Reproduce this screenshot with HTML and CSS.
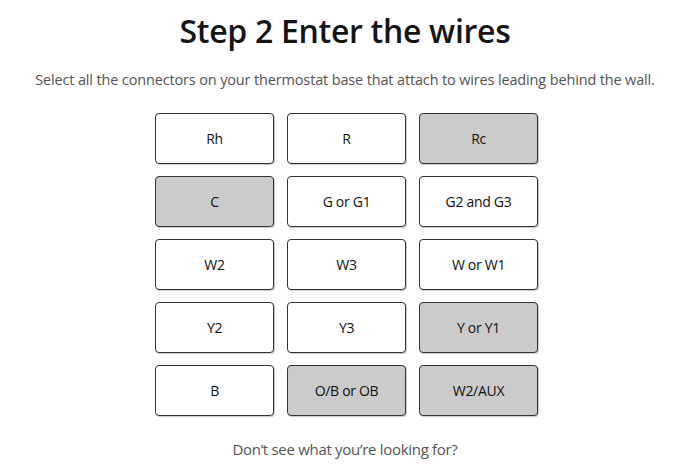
FILE: index.html
```html
<!DOCTYPE html>
<html>
<head>
<meta charset="utf-8">
<link rel="stylesheet" href="styles.css">
</head>
<body>
<main class="page">
  <h1 class="title">Step 2 Enter the wires</h1>
  <p class="subtitle">Select all the connectors on your thermostat base that attach to wires leading behind the wall.</p>
  <div class="grid">
    <button class="wire">Rh</button>
    <button class="wire">R</button>
    <button class="wire selected">Rc</button>
    <button class="wire selected">C</button>
    <button class="wire">G or G1</button>
    <button class="wire">G2 and G3</button>
    <button class="wire">W2</button>
    <button class="wire">W3</button>
    <button class="wire">W or W1</button>
    <button class="wire">Y2</button>
    <button class="wire">Y3</button>
    <button class="wire selected">Y or Y1</button>
    <button class="wire">B</button>
    <button class="wire selected">O/B or OB</button>
    <button class="wire selected">W2/AUX</button>
  </div>
  <p class="footer">Don’t see what you’re looking for?</p>
</main>
</body>
</html>
```
FILE: styles.css
```css
* { box-sizing: border-box; }
html, body { margin: 0; padding: 0; background: #fff; }
body { font-family: "Open Sans", "Noto Sans", sans-serif; color: #111; }
.page { display: flex; flex-direction: column; align-items: center; padding-top: 9px; }
.title { margin: 0; font-size: 32px; font-weight: 600; line-height: 44px; letter-spacing: -0.3px; color: #151515; }
.subtitle { margin: 16px 0 0; font-size: 14.5px; line-height: 22px; color: #555; letter-spacing: -0.15px; }
.grid { margin: 22px 0 0 3px; display: grid; grid-template-columns: repeat(3, 119px); grid-auto-rows: 51px; column-gap: 13px; row-gap: 12px; }
.wire { font-family: inherit; font-size: 14px; color: #111; background: #fff; border: 1px solid #333; border-radius: 4px; padding: 0; letter-spacing: -0.3px; box-shadow: 1px 1px 0 rgba(0,0,0,0.2); }
.wire.selected { background: #cbcbcb; }
.footer { margin: 22px 0 0; font-size: 15px; line-height: 22px; color: #555; letter-spacing: -0.3px; }
```
